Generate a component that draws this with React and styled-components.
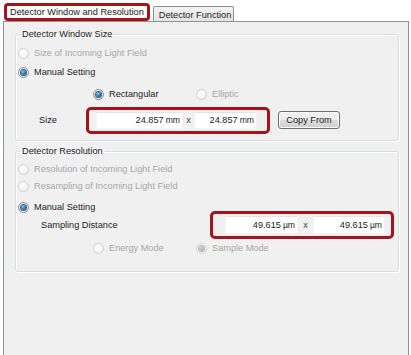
import React from 'react';
import styled, { createGlobalStyle, css } from 'styled-components';

const Global = createGlobalStyle`
  html, body { margin: 0; padding: 0; background: #ffffff; }
  body {
    font-family: "Liberation Sans", Arial, sans-serif;
    font-size: 9.2px;
    color: #1c1c1c;
  }
  * { box-sizing: border-box; }
`;

const Screen = styled.div`
  width: 411px;
  height: 355px;
  overflow: hidden;
  padding: 3px 2px 0 3px;
  display: flex;
  flex-direction: column;
`;

const TabStrip = styled.div`
  display: flex;
  align-items: flex-end;
  height: 18px;
  gap: 3px;
  padding-left: 1px;
  position: relative;
  z-index: 1;
`;

const Tab = styled.div`
  display: flex;
  align-items: center;
  white-space: nowrap;
  line-height: 12px;
  ${(p) =>
    p.$active
      ? css`
          height: 18px;
          padding: 0 3px;
          border: 3px solid #a3141f;
          border-radius: 4px;
          background: #fbfbfb;
        `
      : css`
          height: 15px;
          padding: 1px 2px 0 5px;
          border: 1px solid #8c8e94;
          border-bottom: none;
          border-radius: 2px 2px 0 0;
          background: linear-gradient(#f3f3f3, #e4e4e4);
        `}
`;

const Panel = styled.div`
  flex: 1;
  border: 1px solid #8f9297;
  border-bottom: none;
  background: #f0f0f0;
  padding: 7px 9px 0 11px;
  display: flex;
  flex-direction: column;
  gap: 5px;
`;

const Group = styled.fieldset`
  margin: 0;
  min-width: 0;
  border: 1px solid #d5dfe5;
  border-radius: 3px;
  box-shadow: inset 1px 1px 0 #ffffff, 1px 1px 0 #ffffff;
  padding: 0 0 ${(p) => p.$pb}px 1px;
`;

const Legend = styled.legend`
  padding: 0 2px;
  margin-left: 3px;
  line-height: 11px;
  color: #1c1c1c;
`;

const Row = styled.div`
  display: flex;
  align-items: center;
  height: ${(p) => p.$h || 18}px;
  margin-top: ${(p) => p.$mt || 0}px;
  padding-left: ${(p) => p.$indent || 0}px;
`;

const Option = styled.label`
  display: flex;
  align-items: center;
  gap: 5px;
  width: ${(p) => (p.$w ? `${p.$w}px` : 'auto')};
  color: ${(p) => (p.$disabled ? '#a7a7a7' : '#1c1c1c')};
  white-space: nowrap;
  line-height: 11px;
`;

const Circle = styled.span`
  position: relative;
  flex: none;
  width: 11px;
  height: 11px;
  border-radius: 50%;
  border: 1px solid ${(p) => (p.$disabled ? '#cfd1d3' : '#8a8d91')};
  background: ${(p) =>
    p.$disabled
      ? 'radial-gradient(circle at 40% 35%, #fdfdfd, #eeeeee)'
      : 'radial-gradient(circle at 40% 35%, #ffffff, #dadde0)'};
  display: flex;
  align-items: center;
  justify-content: center;
`;

const Dot = styled.span`
  width: 5px;
  height: 5px;
  border-radius: 50%;
  background: ${(p) =>
    p.$disabled
      ? 'radial-gradient(circle at 40% 35%, #d6d6d6, #9c9c9c)'
      : 'radial-gradient(circle at 40% 35%, #7fc7f2, #1c5a8e 70%, #123b60)'};
  box-shadow: 0 0 0 1px ${(p) => (p.$disabled ? '#b9b9b9' : '#2d5f86')};
`;

const Radio = ({ label, checked, disabled, w }) => (
  <Option $disabled={disabled} $w={w}>
    <Circle $disabled={disabled}>{checked && <Dot $disabled={disabled} />}</Circle>
    <span>{label}</span>
  </Option>
);

const FieldLabel = styled.span`
  width: ${(p) => p.$w}px;
  flex: none;
  line-height: 11px;
`;

const Highlight = styled.div`
  display: flex;
  align-items: center;
  flex: none;
  border: 3px solid #a3141f;
  border-radius: 5px;
  padding: 2px ${(p) => p.$pr}px 2px ${(p) => p.$pl}px;
`;

const Input = styled.div`
  width: ${(p) => p.$w}px;
  height: ${(p) => p.$h}px;
  background: #ffffff;
  border: 1px solid #f4f4f4;
  border-top-color: #e4e4e4;
  display: flex;
  align-items: center;
  justify-content: flex-end;
  padding-right: 2px;
  white-space: nowrap;
  color: #1c1c1c;
`;

const Unit = styled.span`
  margin-left: 2px;
  font-size: 8.6px;
`;

const Times = styled.span`
  width: ${(p) => p.$w}px;
  text-align: center;
  color: #444;
`;

const Button = styled.button`
  margin-left: 8px;
  width: 62px;
  height: 18px;
  padding: 0;
  font: inherit;
  color: #1c1c1c;
  border: 1px solid #707070;
  border-radius: 3px;
  background: linear-gradient(#f2f2f2 0%, #ebebeb 50%, #dddddd 51%, #cfcfcf 100%);
  box-shadow: inset 0 0 0 1px #fbfbfb;
`;

const Value = ({ num, unit, w, h }) => (
  <Input $w={w} $h={h}>
    {num}
    <Unit>{unit}</Unit>
  </Input>
);

export default function App() {
  return (
    <>
      <Global />
      <Screen>
        <TabStrip>
          <Tab $active>Detector Window and Resolution</Tab>
          <Tab>Detector Function</Tab>
        </TabStrip>
        <Panel>
          <Group $pb={11}>
            <Legend>Detector Window Size</Legend>
            <Row $mt={4} $indent={1}>
              <Radio label="Size of Incoming Light Field" disabled />
            </Row>
            <Row $mt={1} $indent={1}>
              <Radio label="Manual Setting" checked />
            </Row>
            <Row $mt={4} $indent={76}>
              <Radio label="Rectangular" checked w={103} />
              <Radio label="Elliptic" disabled />
            </Row>
            <Row $mt={8} $indent={22}>
              <FieldLabel $w={47}>Size</FieldLabel>
              <Highlight $pl={7} $pr={10}>
                <Value num="24.857" unit="mm" w={87} h={17} />
                <Times $w={11}>x</Times>
                <Value num="24.857" unit="mm" w={63} h={17} />
              </Highlight>
              <Button>Copy From</Button>
            </Row>
          </Group>
          <Group $pb={14}>
            <Legend>Detector Resolution</Legend>
            <Row $mt={3} $indent={1}>
              <Radio label="Resolution of Incoming Light Field" disabled />
            </Row>
            <Row $mt={-1} $indent={1}>
              <Radio label="Resampling of Incoming Light Field" disabled />
            </Row>
            <Row $mt={2} $h={20} $indent={1}>
              <Radio label="Manual Setting" checked />
            </Row>
            <Row $mt={-1} $indent={24}>
              <FieldLabel $w={169}>Sampling Distance</FieldLabel>
              <Highlight $pl={12} $pr={6}>
                <Value num="49.615" unit="µm" w={73} h={18} />
                <Times $w={15}>x</Times>
                <Value num="49.615" unit="µm" w={72} h={18} />
              </Highlight>
            </Row>
            <Row $mt={5} $indent={76}>
              <Radio label="Energy Mode" disabled w={103} />
              <Radio label="Sample Mode" disabled checked />
            </Row>
          </Group>
        </Panel>
      </Screen>
    </>
  );
}
